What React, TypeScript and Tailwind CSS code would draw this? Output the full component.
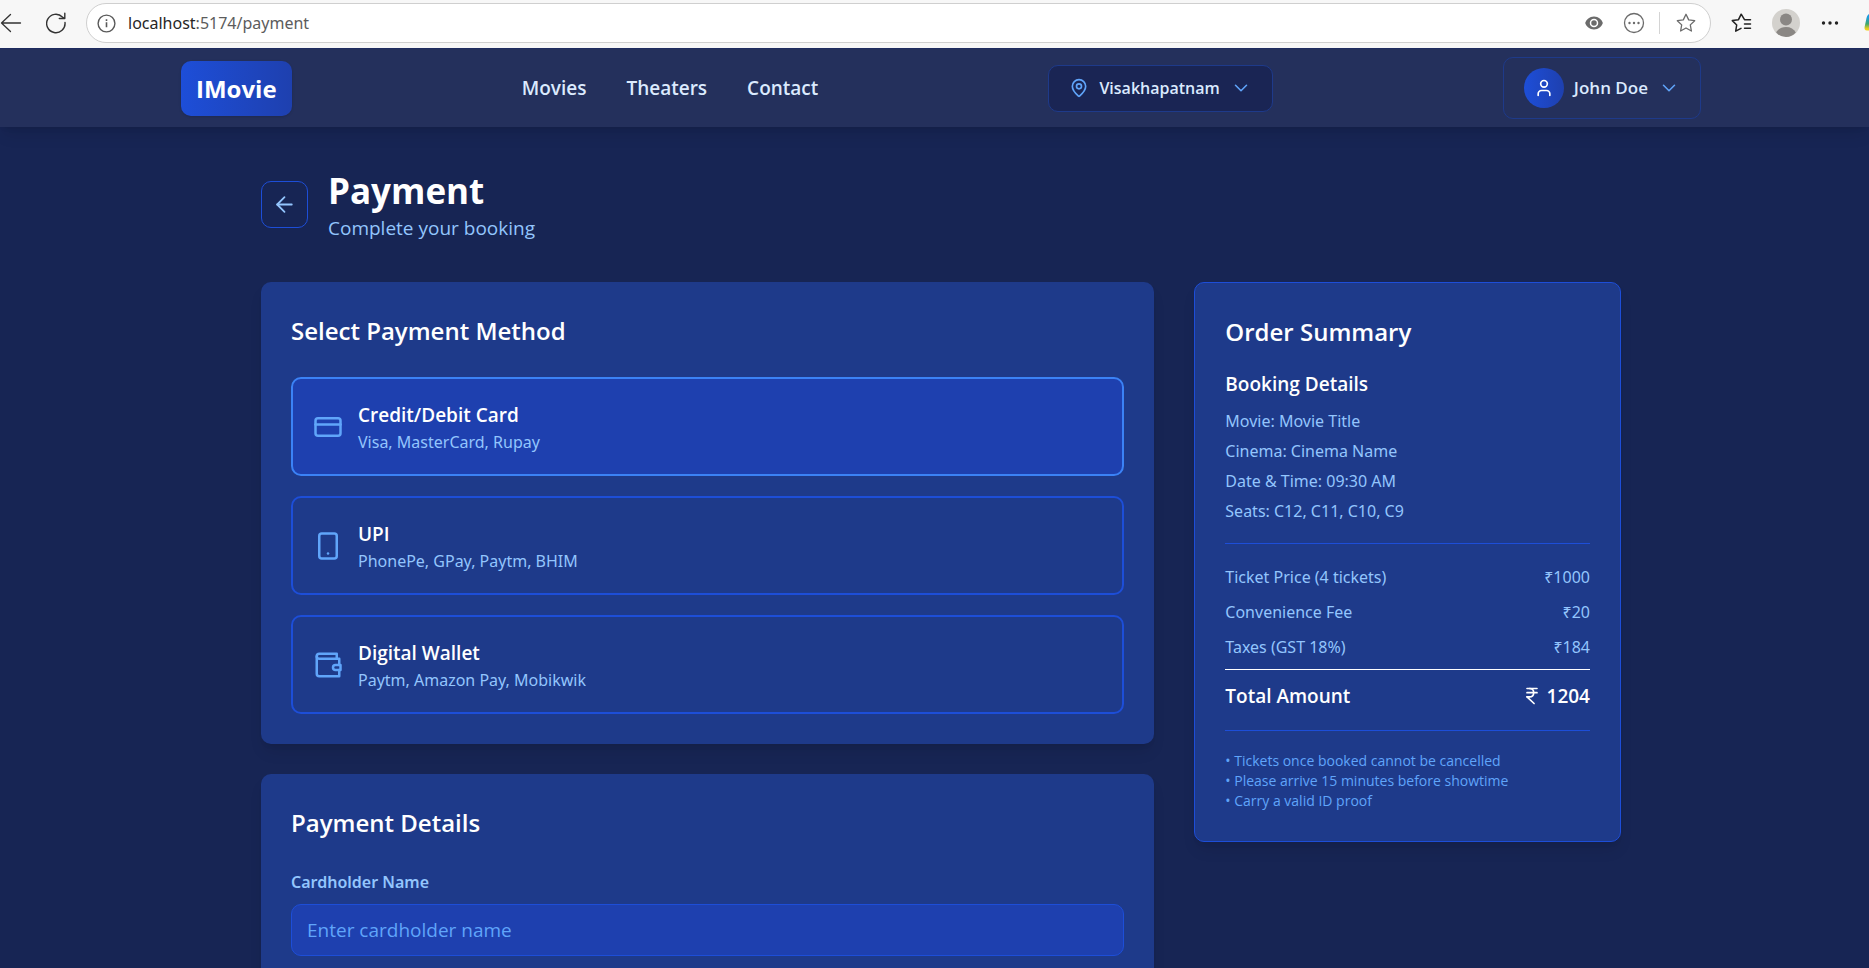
import { useState } from "react";
import type { ReactNode } from "react";
import {
  ArrowLeft,
  ChevronDown,
  CreditCard,
  IndianRupee,
  MapPin,
  Smartphone,
  User,
} from "lucide-react";

function WalletIcon() {
  return (
    <svg width="30" height="30" viewBox="0 0 24 24" fill="none" stroke="currentColor" strokeWidth="2" strokeLinecap="round" strokeLinejoin="round" aria-hidden="true">
      <path d="M21 12V7H5a2 2 0 0 1 0-4h14v4" />
      <path d="M3 5v14a2 2 0 0 0 2 2h16v-5" />
      <path d="M18 12a2 2 0 0 0 0 4h4v-4Z" />
    </svg>
  );
}

const STAR = "M10 1.3l2.7 5.6 6 .8-4.4 4.2 1.1 6.1-5.4-3-5.4 3 1.1-6.1L1.3 7.7l6-.8z";

function BrowserBar() {
  return (
    <div className="flex h-12 shrink-0 items-center overflow-hidden bg-[#f7f7f7] pb-0.5 text-[#333333]">
      <button type="button" aria-label="Back" className="shrink-0">
        <svg width="22" height="20" viewBox="0 0 22 20" fill="none" stroke="currentColor" strokeWidth="1.3" strokeLinecap="round" strokeLinejoin="round">
          <path d="M20.5 10H1.5M10.5 1.500 1.5 10l9 8.500" />
        </svg>
      </button>
      <button type="button" aria-label="Refresh" className="ml-6 shrink-0">
        <svg width="20" height="22" viewBox="0 0 20 22" fill="none" stroke="currentColor" strokeWidth="1.4" strokeLinecap="round" strokeLinejoin="round">
          <path d="M19 10.500a9.200 9.200 0 1 1-2.600-5.500L18.700 6.500M18.800 1.200v5.300h-5.500" />
        </svg>
      </button>
      <div className="ml-5 flex h-10 grow items-center rounded-full border border-[#cfcfcf] bg-white px-2.5">
        <svg width="19" height="19" viewBox="0 0 19 19" fill="none" stroke="#5a5a5a" strokeWidth="1.4" aria-hidden="true">
          <circle cx="9.5" cy="9.5" r="8.4" />
          <path d="M9.5 8.300v5M9.5 5.300v1.600" strokeWidth="1.6" />
        </svg>
        <span className="ml-3 grow font-['Noto_Sans','Open_Sans',sans-serif] text-[16px] text-[#5c5c5c]">
          <span className="text-[#262626]">localhost</span>:5174/payment
        </span>
        <svg width="18" height="14" viewBox="0 0 18 14" aria-hidden="true">
          <path d="M9 .5C4.500.5 1.200 3.500.2 7c1 3.500 4.300 6.500 8.800 6.500s7.800-3 8.800-6.500C16.800 3.500 13.500.5 9 .5z" fill="#6b6b6b" />
          <circle cx="9" cy="7" r="3.500" fill="none" stroke="#fff" strokeWidth="1.500" />
        </svg>
        <svg className="ml-5" width="22" height="22" viewBox="0 0 22 22" fill="none" stroke="#6b6b6b" strokeWidth="1.3" aria-hidden="true">
          <circle cx="11" cy="11" r="9.5" />
          <g fill="#6b6b6b" stroke="none">
            <circle cx="6.500" cy="11" r="1.200" />
            <circle cx="11" cy="11" r="1.200" />
            <circle cx="15.500" cy="11" r="1.200" />
          </g>
        </svg>
        <span className="mr-4 ml-3.5 h-[22px] w-px bg-[#d4d4d4]" />
        <button type="button" aria-label="Add to favorites" className="mr-1">
          <svg width="20" height="20" viewBox="0 0 20 20" fill="none" stroke="#6b6b6b" strokeWidth="1.3" strokeLinejoin="round">
            <path d={STAR} />
          </svg>
        </button>
      </div>
      <button type="button" aria-label="Favorites" className="ml-5 shrink-0">
        <svg width="21" height="20" viewBox="0 0 21 20" fill="none" stroke="#222" strokeWidth="1.500" strokeLinecap="round" strokeLinejoin="round">
          <path d="M19.500 6.700h-6L10.200 1.200 7.500 6.700 1.300 7.600l4.400 4.400-1 6.200 5.300-2.900M13.500 11h6M13.500 15.300h6" />
        </svg>
      </button>
      <button type="button" aria-label="Profile" className="ml-5 shrink-0">
        <svg width="28" height="28" viewBox="0 0 28 28">
          <circle cx="14" cy="14" r="14" fill="#d3d1cd" />
          <circle cx="14" cy="10.500" r="6" fill="#8a8784" />
          <path d="M4.200 23.500C6 20 9.500 18 14 18s8 2 9.800 5.500A14 14 0 0 1 14 28a14 14 0 0 1-9.800-4.500z" fill="#8a8784" />
        </svg>
      </button>
      <button type="button" aria-label="Settings and more" className="ml-5 shrink-0">
        <svg width="20" height="6" viewBox="0 0 20 6" fill="#222">
          <circle cx="3.500" cy="3" r="1.700" />
          <circle cx="10" cy="3" r="1.700" />
          <circle cx="16.500" cy="3" r="1.700" />
        </svg>
      </button>
      <svg className="ml-6 shrink-0" width="5" height="18" viewBox="0 0 5 18" aria-hidden="true">
        <defs>
          <linearGradient id="edge" x1="0" y1="0" x2="0" y2="1">
            <stop offset="0.200" stopColor="#1a9be0" />
            <stop offset="0.600" stopColor="#3fa66b" />
            <stop offset="0.900" stopColor="#f0d01a" />
          </linearGradient>
        </defs>
        <path d="M5 0C3.300 1 2.600 3 2.100 6L.600 13C.300 15 .900 16.500 3 16.500h2z" fill="url(#edge)" />
      </svg>
    </div>
  );
}

function Navbar() {
  return (
    <header className="relative border-t border-[#1e2c60] bg-[#24305c] py-2 pl-[13px] shadow-lg">
      <div className="mx-auto flex max-w-[1520px] items-center justify-between">
        <a href="#home" className="rounded-[10px] bg-gradient-to-r from-[#1d4ed8] to-[#1e40af] px-[15px] py-2.5 text-[24px] leading-[35px] font-bold text-white shadow">
          IMovie
        </a>
        <nav className="flex gap-10 text-[19px] leading-[30px] font-semibold text-[#dbeafe]">
          <a href="#movies">Movies</a>
          <a href="#theaters">Theaters</a>
          <a href="#contact">Contact</a>
        </nav>
        <button type="button" className="flex h-[47px] items-center gap-2.5 rounded-[10px] border border-[#1e3a8a] bg-[#1a2554] px-5 text-[16px] font-semibold text-[#dbeafe]">
          <MapPin size={20} className="text-[#60a5fa]" />
          Visakhapatnam
          <ChevronDown size={22} strokeWidth={1.7} className="text-[#60a5fa]" />
        </button>
        <button type="button" className="flex h-[62px] items-center gap-2.5 rounded-[10px] border border-[#1e3a8a] px-5 text-[17px] font-semibold text-[#dbeafe]">
          <span className="flex size-10 items-center justify-center rounded-full bg-gradient-to-r from-[#1d4ed8] to-[#1e40af] text-white">
            <User size={20} />
          </span>
          John Doe
          <ChevronDown size={22} strokeWidth={1.7} className="text-[#60a5fa]" />
        </button>
      </div>
    </header>
  );
}

type Method = { id: string; title: string; note: string; icon: ReactNode };

const METHODS: Method[] = [
  { id: "card", title: "Credit/Debit Card", note: "Visa, MasterCard, Rupay", icon: <CreditCard size={30} /> },
  { id: "upi", title: "UPI", note: "PhonePe, GPay, Paytm, BHIM", icon: <Smartphone size={30} /> },
  { id: "wallet", title: "Digital Wallet", note: "Paytm, Amazon Pay, Mobikwik", icon: <WalletIcon /> },
];

function PaymentMethods() {
  const [selected, setSelected] = useState("card");
  return (
    <section className="rounded-[10px] bg-[#1e3a8a] p-[30px] shadow-lg">
      <h2 className="text-[24px] leading-[37px] font-semibold text-white">Select Payment Method</h2>
      <div className="mt-7 flex flex-col gap-5">
        {METHODS.map((m) => (
          <button
            key={m.id}
            type="button"
            aria-pressed={selected === m.id}
            onClick={() => setSelected(m.id)}
            className={
              selected === m.id
                ? "flex items-center gap-[15px] rounded-[10px] border-2 border-[#3b82f6] bg-[#1e40af] p-5 text-left"
                : "flex items-center gap-[15px] rounded-[10px] border-2 border-[#1d4ed8] p-5 text-left"
            }
          >
            <span className="text-[#60a5fa]">{m.icon}</span>
            <span className="flex flex-col">
              <span className="text-[19px] leading-8 font-semibold text-white">{m.title}</span>
              <span className="font-['Noto_Sans','Open_Sans',sans-serif] text-[16px] leading-[23px] text-[#93c5fd]">{m.note}</span>
            </span>
          </button>
        ))}
      </div>
    </section>
  );
}

function PaymentDetails() {
  return (
    <section className="rounded-[10px] bg-[#1e3a8a] p-[30px] shadow-lg">
      <h2 className="text-[24px] leading-[37px] font-semibold text-white">Payment Details</h2>
      <label htmlFor="cardholder" className="mt-7 block font-['Noto_Sans','Open_Sans',sans-serif] text-[16px] leading-[27px] font-semibold text-[#93c5fd]">
        Cardholder Name
      </label>
      <input
        id="cardholder"
        type="text"
        placeholder="Enter cardholder name"
        className="mt-2 h-[52px] w-full rounded-[10px] border border-[#1d4ed8] bg-[#1e40af] px-[15px] text-[19px] text-white placeholder:text-[#60a5fa]"
      />
    </section>
  );
}

const BOOKING = ["Movie: Movie Title", "Cinema: Cinema Name", "Date & Time: 09:30 AM", "Seats: C12, C11, C10, C9"];

const CHARGES = [
  ["Ticket Price (4 tickets)", "₹1000"],
  ["Convenience Fee", "₹20"],
  ["Taxes (GST 18%)", "₹184"],
];

const NOTES = ["Tickets once booked cannot be cancelled", "Please arrive 15 minutes before showtime", "Carry a valid ID proof"];

function OrderSummary() {
  return (
    <aside className="rounded-[10px] border border-[#1d4ed8] bg-[#1e3a8a] p-[30px] shadow-lg">
      <h2 className="text-[24px] leading-[37px] font-semibold text-white">Order Summary</h2>
      <h3 className="mt-[18px] text-[19px] leading-8 font-semibold text-white">Booking Details</h3>
      <div className="mt-2 flex flex-col gap-[3px] border-b border-[#1d4ed8] pb-[18px] font-['Noto_Sans','Open_Sans',sans-serif] text-[16px] leading-[27px] text-[#93c5fd]">
        {BOOKING.map((line) => (
          <p key={line}>{line}</p>
        ))}
      </div>
      <dl className="mt-5 flex flex-col gap-2 border-b border-white pb-2 font-['Noto_Sans','Open_Sans',sans-serif] text-[16px] leading-[27px] text-[#93c5fd]">
        {CHARGES.map(([name, amount]) => (
          <div key={name} className="flex justify-between">
            <dt>{name}</dt>
            <dd>{amount}</dd>
          </div>
        ))}
      </dl>
      <div className="flex items-center justify-between border-b border-[#1d4ed8] pt-2.5 pb-[18px] text-[19px] leading-8 font-semibold text-white">
        <span>Total Amount</span>
        <span className="flex items-center gap-[5px]">
          <IndianRupee size={20} />
          1204
        </span>
      </div>
      <div className="mt-5 text-[14px] leading-5 text-[#60a5fa]">
        {NOTES.map((note) => (
          <p key={note}>• {note}</p>
        ))}
      </div>
    </aside>
  );
}

export default function App() {
  return (
    <div className="flex h-screen flex-col bg-[#172554] font-['Open_Sans','Noto_Sans',sans-serif]">
      <BrowserBar />
      <div className="grow overflow-y-auto [scrollbar-width:none]">
        <Navbar />
        <main className="pl-[13px]">
          <div className="mx-auto max-w-[1360px] py-10">
            <div className="flex items-center gap-5">
              <button type="button" aria-label="Go back" className="flex size-[47px] items-center justify-center rounded-[10px] border border-[#1d4ed8] text-[#93c5fd]">
                <ArrowLeft size={25} strokeWidth={1.7} />
              </button>
              <div>
                <h1 className="text-[35px] leading-[47px] font-bold text-white">Payment</h1>
                <p className="text-[19px] leading-7 text-[#93c5fd]">Complete your booking</p>
              </div>
            </div>
            <div className="mt-10 grid grid-cols-3 items-start gap-10">
              <div className="col-span-2 flex flex-col gap-[30px]">
                <PaymentMethods />
                <PaymentDetails />
              </div>
              <OrderSummary />
            </div>
          </div>
        </main>
      </div>
    </div>
  );
}
